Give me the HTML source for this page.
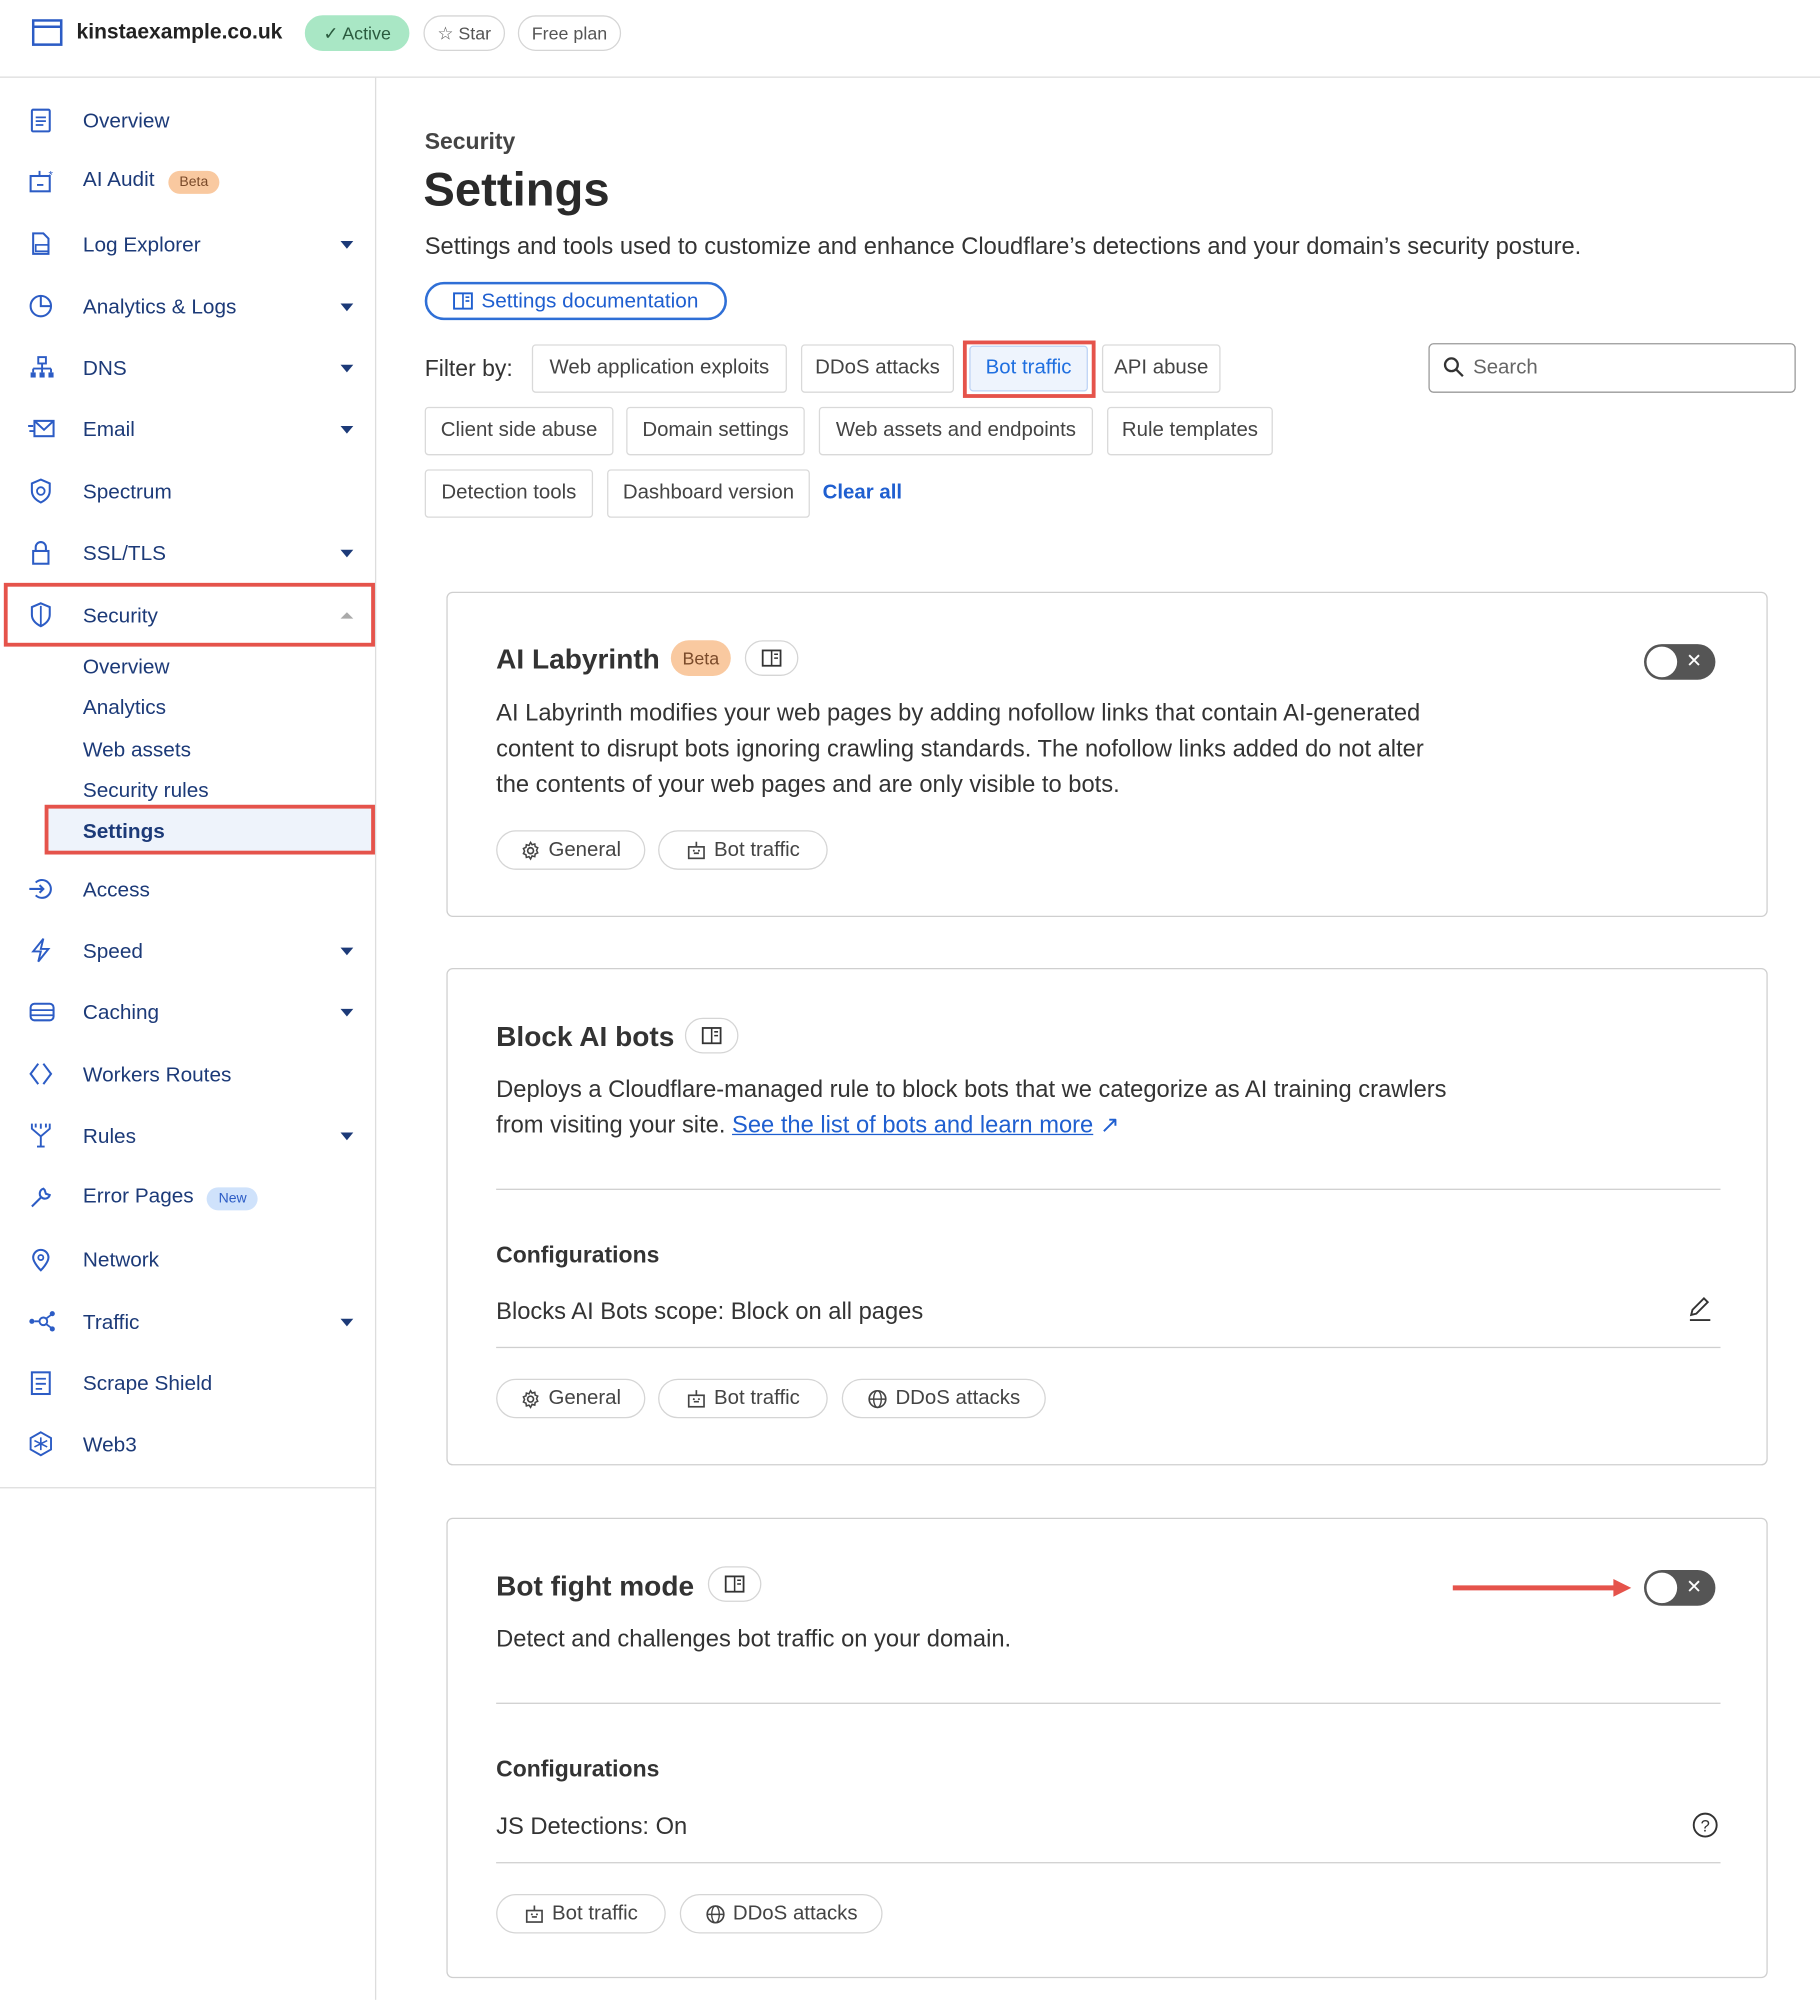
<!DOCTYPE html>
<html><head><meta charset="utf-8"><style>
*{box-sizing:border-box;margin:0;padding:0}
body{width:1820px;height:1999px;overflow:hidden;background:#fff;font-family:"Liberation Sans",sans-serif;color:#333}
#w{position:absolute;left:0;top:0;width:1427px;height:1568px;transform:scale(1.2754);transform-origin:0 0}
.a{position:absolute;white-space:nowrap}
.pill{position:absolute;border:1px solid #d5d5d5;border-radius:16px;font-size:14px;color:#555;display:flex;align-items:center;justify-content:center;gap:5px}
.nav{position:absolute;left:0;width:295px;height:40px;display:flex;align-items:center;font-size:16.3px;color:#1c3a78}
.nav svg{position:absolute;left:22px}
.nav span{position:absolute;left:65px;top:12px}
.nav .car{position:absolute;left:267px;top:18px;width:0;height:0;border-left:5px solid transparent;border-right:5px solid transparent;border-top:6px solid #1c3a78}
.sub{position:absolute;left:65px;font-size:16.3px;color:#1c3a78}
.chip{position:absolute;height:38px;border:1px solid #d9d9d9;border-radius:3px;font-size:16px;color:#444;display:flex;align-items:center;justify-content:center}
.card{position:absolute;left:350px;width:1036px;border:1px solid #cfcfcf;border-radius:5px}
.title{position:absolute;font-size:22px;font-weight:bold;color:#333}
.txt{position:absolute;font-size:18.6px;color:#333;line-height:28px}
.tag{position:absolute;height:31px;border:1px solid #d5d5d5;border-radius:16px;font-size:16px;color:#444;display:flex;align-items:center;justify-content:center;gap:6px}
.book{position:absolute;height:28px;width:42px;border:1px solid #d5d5d5;border-radius:14px;display:flex;align-items:center;justify-content:center}
.tog{position:absolute;width:56px;height:28px;border-radius:14px;background:#555;}
.tog:before{content:"";position:absolute;left:2px;top:2px;width:24px;height:24px;border-radius:50%;background:#fff}
.tog:after{content:"✕";position:absolute;left:33px;top:4px;color:#fff;font-size:15px}
.hr{position:absolute;left:38px;width:960px;height:1px;background:#cfcfcf}
</style></head><body><div id="w">
<svg style="display:none"><defs>
<symbol id="bot" viewBox="0 0 16 16"><rect x="2" y="5" width="12" height="9" fill="none" stroke="#444" stroke-width="1.3"/><path d="M8 1v4M6 10h4" stroke="#444" stroke-width="1.3"/><circle cx="6" cy="8" r=".8" fill="#444"/><circle cx="10" cy="8" r=".8" fill="#444"/></symbol>
<symbol id="gear" viewBox="0 0 16 16"><circle cx="8" cy="8" r="2.3" fill="none" stroke="#444" stroke-width="1.3"/><path d="M8 1.5l1.2 1.8 2.1-.6.3 2.1 2 .9-.9 2 .9 2-2 .9-.3 2.1-2.1-.6L8 14.5l-1.2-1.8-2.1.6-.3-2.1-2-.9.9-2-.9-2 2-.9.3-2.1 2.1.6z" fill="none" stroke="#444" stroke-width="1.2"/></symbol>
<symbol id="globe" viewBox="0 0 16 16"><circle cx="8" cy="8" r="6.5" fill="none" stroke="#444" stroke-width="1.3"/><ellipse cx="8" cy="8" rx="3" ry="6.5" fill="none" stroke="#444" stroke-width="1.1"/><path d="M1.5 8h13" stroke="#444" stroke-width="1.1"/></symbol>
</defs></svg>
<!-- header -->
<svg class="a" style="left:25px;top:15px" width="24" height="22" viewBox="0 0 24 22"><rect x="1" y="1" width="22" height="19" fill="none" stroke="#2c5cc5" stroke-width="2"/><line x1="1" y1="6" x2="23" y2="6" stroke="#2c5cc5" stroke-width="2"/></svg>
<div class="a" style="left:60px;top:16px;font-size:16.5px;font-weight:bold;color:#222">kinstaexample.co.uk</div>
<div class="pill" style="left:239px;top:12px;width:82px;height:28px;background:#a9e7c5;border-color:#a9e7c5;color:#2a5a3e">✓ Active</div>
<div class="pill" style="left:332px;top:12px;width:64px;height:28px">☆ Star</div>
<div class="pill" style="left:406px;top:12px;width:81px;height:28px">Free plan</div>
<div class="a" style="left:0;top:60px;width:1427px;height:1px;background:#ddd"></div>
<div class="a" style="left:294px;top:61px;width:1px;height:1507px;background:#ddd"></div>
<div class="a" style="left:0;top:1166px;width:295px;height:1px;background:#ddd"></div>
<!-- sidebar -->
<div class="a" style="left:3px;top:457px;width:291px;height:50px;border:3px solid #e5534b"></div>
<div class="a" style="left:35px;top:631px;width:259px;height:39px;border:3px solid #e5534b;background:#eef3fb"></div>
<div class="nav" style="top:74px"><svg width="20" height="20"><rect x="3" y="2" width="14" height="17" rx="1" fill="none" stroke="#2c5cc5" stroke-width="1.6"/><path d="M6 8h8M6 11h8M6 14h6" stroke="#2c5cc5" stroke-width="1.4"/></svg><span>Overview</span></div>
<div class="nav" style="top:122px"><svg width="22" height="20"><rect x="2" y="6" width="15" height="12" fill="none" stroke="#2c5cc5" stroke-width="1.6"/><path d="M9 2v4M7 13h5" stroke="#2c5cc5" stroke-width="1.5"/><text x="16" y="8" font-size="9" fill="#2c5cc5">*</text></svg><span style="top:10px">AI Audit <b style="display:inline-block;margin-left:6px;background:#f9c9a0;color:#7a4a2a;font-size:11px;font-weight:normal;border-radius:10px;padding:3px 9px">Beta</b></span></div>
<div class="nav" style="top:171px"><svg width="20" height="20"><path d="M4 2h8l4 4v12H4z" fill="none" stroke="#2c5cc5" stroke-width="1.6"/><rect x="6" y="11" width="10" height="5" fill="none" stroke="#2c5cc5" stroke-width="1.3"/></svg><span>Log Explorer</span><i class="car"></i></div>
<div class="nav" style="top:220px"><svg width="20" height="20"><circle cx="10" cy="10" r="8" fill="none" stroke="#2c5cc5" stroke-width="1.6"/><path d="M10 2v8h8" fill="none" stroke="#2c5cc5" stroke-width="1.6"/></svg><span>Analytics &amp; Logs</span><i class="car"></i></div>
<div class="nav" style="top:268px"><svg width="22" height="20"><rect x="8" y="2" width="6" height="5" fill="none" stroke="#2c5cc5" stroke-width="1.5"/><path d="M11 7v4M4 11h14M4 11v3M11 11v3M18 11v3" stroke="#2c5cc5" stroke-width="1.5"/><rect x="2" y="14" width="4" height="4" fill="#2c5cc5"/><rect x="9" y="14" width="4" height="4" fill="#2c5cc5"/><rect x="16" y="14" width="4" height="4" fill="#2c5cc5"/></svg><span>DNS</span><i class="car"></i></div>
<div class="nav" style="top:316px"><svg width="22" height="20"><rect x="5" y="4" width="15" height="12" fill="none" stroke="#2c5cc5" stroke-width="1.6"/><path d="M5 4l7.5 7L20 4M0 8h4M1 12h4" fill="none" stroke="#2c5cc5" stroke-width="1.5"/></svg><span>Email</span><i class="car"></i></div>
<div class="nav" style="top:365px"><svg width="20" height="20"><path d="M10 1l7 3v6c0 4-3 7-7 9-4-2-7-5-7-9V4z" fill="none" stroke="#2c5cc5" stroke-width="1.6"/><circle cx="10" cy="10" r="3" fill="none" stroke="#2c5cc5" stroke-width="1.4"/></svg><span>Spectrum</span></div>
<div class="nav" style="top:413px"><svg width="20" height="20"><rect x="4" y="9" width="12" height="10" fill="none" stroke="#2c5cc5" stroke-width="1.6"/><path d="M6 9V6a4 4 0 018 0v3" fill="none" stroke="#2c5cc5" stroke-width="1.6"/></svg><span>SSL/TLS</span><i class="car"></i></div>
<div class="nav" style="top:462px"><svg width="20" height="20"><path d="M10 1l7 3v6c0 4-3 7-7 9-4-2-7-5-7-9V4z" fill="none" stroke="#2c5cc5" stroke-width="1.6"/><path d="M10 3v15" stroke="#2c5cc5" stroke-width="1.4"/></svg><span>Security</span><i class="car" style="border-top:0;border-bottom:5px solid #aaa"></i></div>
<div class="sub" style="top:514px">Overview</div>
<div class="sub" style="top:546px">Analytics</div>
<div class="sub" style="top:579px">Web assets</div>
<div class="sub" style="top:611px">Security rules</div>
<div class="sub" style="top:643px;font-weight:bold">Settings</div>
<div class="nav" style="top:677px"><svg width="22" height="20"><path d="M6 5a7 7 0 110 10M1 10h11M9 7l3 3-3 3" fill="none" stroke="#2c5cc5" stroke-width="1.6"/></svg><span>Access</span></div>
<div class="nav" style="top:725px"><svg width="20" height="20"><path d="M12 1L4 11h6l-2 8 8-10h-6z" fill="none" stroke="#2c5cc5" stroke-width="1.5"/></svg><span>Speed</span><i class="car"></i></div>
<div class="nav" style="top:773px"><svg width="22" height="20"><rect x="2" y="4" width="18" height="13" rx="3" fill="none" stroke="#2c5cc5" stroke-width="1.6"/><path d="M2 9h18M2 13h18" stroke="#2c5cc5" stroke-width="1.4"/></svg><span>Caching</span><i class="car"></i></div>
<div class="nav" style="top:822px"><svg width="20" height="20"><path d="M8 2L2 10l6 8M12 2l6 8-6 8" fill="none" stroke="#2c5cc5" stroke-width="1.6"/></svg><span>Workers Routes</span></div>
<div class="nav" style="top:870px"><svg width="20" height="22"><path d="M3 2v4l7 6 7-6V2M10 12v8M7 20h6M6 2v3M10 2v4M14 2v3" fill="none" stroke="#2c5cc5" stroke-width="1.5"/></svg><span>Rules</span><i class="car"></i></div>
<div class="nav" style="top:919px"><svg width="20" height="20"><path d="M3 17l7-7M12 3a4 4 0 105 5l-3-1-1-3z" fill="none" stroke="#2c5cc5" stroke-width="1.6"/></svg><span style="top:10px">Error Pages <b style="display:inline-block;margin-left:6px;background:#cfe2fb;color:#2c5cc5;font-size:11px;font-weight:normal;border-radius:10px;padding:3px 9px">New</b></span></div>
<div class="nav" style="top:967px"><svg width="20" height="20"><path d="M10 19s6-6 6-10a6 6 0 00-12 0c0 4 6 10 6 10z" fill="none" stroke="#2c5cc5" stroke-width="1.6"/><circle cx="10" cy="9" r="2" fill="none" stroke="#2c5cc5" stroke-width="1.4"/></svg><span>Network</span></div>
<div class="nav" style="top:1016px"><svg width="22" height="20"><circle cx="12" cy="10" r="3" fill="none" stroke="#2c5cc5" stroke-width="1.5"/><circle cx="3" cy="10" r="2" fill="#2c5cc5"/><circle cx="19" cy="4" r="2" fill="#2c5cc5"/><circle cx="19" cy="16" r="2" fill="#2c5cc5"/><path d="M5 10h4M14 8l4-3M14 12l4 3" stroke="#2c5cc5" stroke-width="1.4"/></svg><span>Traffic</span><i class="car"></i></div>
<div class="nav" style="top:1064px"><svg width="20" height="20"><rect x="3" y="2" width="14" height="17" fill="none" stroke="#2c5cc5" stroke-width="1.6"/><path d="M6 7h8M6 11h8M6 15h5" stroke="#2c5cc5" stroke-width="1.4"/></svg><span>Scrape Shield</span></div>
<div class="nav" style="top:1112px"><svg width="20" height="20"><path d="M10 1l8 4.5v9L10 19l-8-4.5v-9z" fill="none" stroke="#2c5cc5" stroke-width="1.5"/><path d="M10 5v10M5 7.5l10 5M15 7.5l-10 5" stroke="#2c5cc5" stroke-width="1.3"/></svg><span>Web3</span></div>
<!-- main -->
<div class="a" style="left:333px;top:101px;font-size:18px;font-weight:bold;color:#444">Security</div>
<div class="a" style="left:332px;top:128px;font-size:37px;font-weight:bold;color:#2a2a2a">Settings</div>
<div class="a" style="left:333px;top:182px;font-size:18.6px;color:#333">Settings and tools used to customize and enhance Cloudflare’s detections and your domain’s security posture.</div>
<div class="a" style="left:333px;top:221px;width:237px;height:30px;border:2px solid #2f6fd6;border-radius:15px;color:#1f5fd0;font-size:16.3px;display:flex;align-items:center;justify-content:center;gap:6px"><svg width="16" height="16"><rect x="1" y="2" width="14" height="12" fill="none" stroke="#1f5fd0" stroke-width="1.5"/><path d="M8 2v12M10 5h3M10 8h3" stroke="#1f5fd0" stroke-width="1.3"/></svg>Settings documentation</div>
<div class="a" style="left:333px;top:279px;font-size:18px;color:#333">Filter by:</div>
<div class="chip" style="left:417px;top:270px;width:200px">Web application exploits</div>
<div class="chip" style="left:628px;top:270px;width:120px">DDoS attacks</div>
<div class="a" style="left:755px;top:267px;width:104px;height:45px;border:3px solid #e5534b"></div>
<div class="chip" style="left:760px;top:271px;width:93px;height:36px;color:#1f6fe0;background:#eef4fd;border-color:#bcd3f5">Bot traffic</div>
<div class="chip" style="left:864px;top:270px;width:93px">API abuse</div>
<div class="chip" style="left:333px;top:319px;width:148px">Client side abuse</div>
<div class="chip" style="left:491px;top:319px;width:140px">Domain settings</div>
<div class="chip" style="left:642px;top:319px;width:215px">Web assets and endpoints</div>
<div class="chip" style="left:868px;top:319px;width:130px">Rule templates</div>
<div class="chip" style="left:333px;top:368px;width:132px">Detection tools</div>
<div class="chip" style="left:476px;top:368px;width:159px">Dashboard version</div>
<div class="a" style="left:645px;top:378px;font-size:16px;color:#1f5fd0;font-weight:bold">Clear all</div>
<div class="a" style="left:1120px;top:269px;width:288px;height:39px;border:1px solid #999;border-radius:4px;font-size:16px;color:#666;padding:10px 0 0 34px">Search</div>
<svg class="a" style="left:1131px;top:279px" width="18" height="18"><circle cx="7" cy="7" r="5" fill="none" stroke="#333" stroke-width="1.8"/><path d="M11 11l5 5" stroke="#333" stroke-width="1.8"/></svg>
<!-- card1 -->
<div class="card" style="top:464px;height:255px">
<div class="title" style="left:38px;top:39px">AI Labyrinth</div>
<div class="a" style="left:175px;top:37px;width:47px;height:28px;border-radius:14px;background:#f9c9a0;color:#7a4a2a;font-size:14px;display:flex;align-items:center;justify-content:center">Beta</div>
<div class="book" style="left:233px;top:37px"><svg width="16" height="16"><rect x="1" y="2" width="14" height="12" fill="none" stroke="#333" stroke-width="1.4"/><path d="M8 2v12M10 5h3M10 8h3" stroke="#333" stroke-width="1.2"/></svg></div>
<div class="tog" style="left:938px;top:40px"></div>
<div class="txt" style="left:38px;top:80px">AI Labyrinth modifies your web pages by adding nofollow links that contain AI-generated<br>content to disrupt bots ignoring crawling standards. The nofollow links added do not alter<br>the contents of your web pages and are only visible to bots.</div>
<div class="tag" style="left:38px;top:186px;width:117px"><svg width="16" height="16"><use href="#gear"/></svg>General</div>
<div class="tag" style="left:165px;top:186px;width:133px"><svg width="16" height="16"><use href="#bot"/></svg>Bot traffic</div>
</div>
<!-- card2 -->
<div class="card" style="top:759px;height:390px">
<div class="title" style="left:38px;top:40px">Block AI bots</div>
<div class="book" style="left:186px;top:38px"><svg width="16" height="16"><rect x="1" y="2" width="14" height="12" fill="none" stroke="#333" stroke-width="1.4"/><path d="M8 2v12M10 5h3M10 8h3" stroke="#333" stroke-width="1.2"/></svg></div>
<div class="txt" style="left:38px;top:80px">Deploys a Cloudflare-managed rule to block bots that we categorize as AI training crawlers<br>from visiting your site. <span style="color:#1f5fd0;text-decoration:underline">See the list of bots and learn more</span> <span style="color:#1f5fd0">↗</span></div>
<div class="hr" style="top:172px"></div>
<div class="a" style="left:38px;top:214px;font-size:18px;font-weight:bold">Configurations</div>
<div class="a" style="left:38px;top:257px;font-size:18.6px">Blocks AI Bots scope: Block on all pages</div>
<svg class="a" style="left:972px;top:256px" width="20" height="20"><path d="M3 15l1-4 9-9 3 3-9 9zM2 19h16" fill="none" stroke="#333" stroke-width="1.5"/></svg>
<div class="hr" style="top:296px"></div>
<div class="tag" style="left:38px;top:321px;width:117px"><svg width="16" height="16"><use href="#gear"/></svg>General</div>
<div class="tag" style="left:165px;top:321px;width:133px"><svg width="16" height="16"><use href="#bot"/></svg>Bot traffic</div>
<div class="tag" style="left:309px;top:321px;width:160px"><svg width="16" height="16"><use href="#globe"/></svg>DDoS attacks</div>
</div>
<!-- card3 -->
<div class="card" style="top:1190px;height:361px">
<div class="title" style="left:38px;top:40px">Bot fight mode</div>
<div class="book" style="left:204px;top:37px"><svg width="16" height="16"><rect x="1" y="2" width="14" height="12" fill="none" stroke="#333" stroke-width="1.4"/><path d="M8 2v12M10 5h3M10 8h3" stroke="#333" stroke-width="1.2"/></svg></div>
<svg class="a" style="left:788px;top:44px" width="144" height="20"><path d="M0 10h130" stroke="#e5534b" stroke-width="4"/><path d="M126 3l14 7-14 7z" fill="#e5534b"/></svg>
<div class="tog" style="left:938px;top:40px"></div>
<div class="txt" style="left:38px;top:80px">Detect and challenges bot traffic on your domain.</div>
<div class="hr" style="top:144px"></div>
<div class="a" style="left:38px;top:186px;font-size:18px;font-weight:bold">Configurations</div>
<div class="a" style="left:38px;top:230px;font-size:18.6px">JS Detections: On</div>
<svg class="a" style="left:975px;top:229px" width="22" height="22"><circle cx="11" cy="11" r="9" fill="none" stroke="#333" stroke-width="1.5"/><text x="11" y="16" font-size="13" text-anchor="middle" fill="#333" font-family="Liberation Sans">?</text></svg>
<div class="hr" style="top:269px"></div>
<div class="tag" style="left:38px;top:294px;width:133px"><svg width="16" height="16"><use href="#bot"/></svg>Bot traffic</div>
<div class="tag" style="left:182px;top:294px;width:159px"><svg width="16" height="16"><use href="#globe"/></svg>DDoS attacks</div>
</div>
</div></body></html>
